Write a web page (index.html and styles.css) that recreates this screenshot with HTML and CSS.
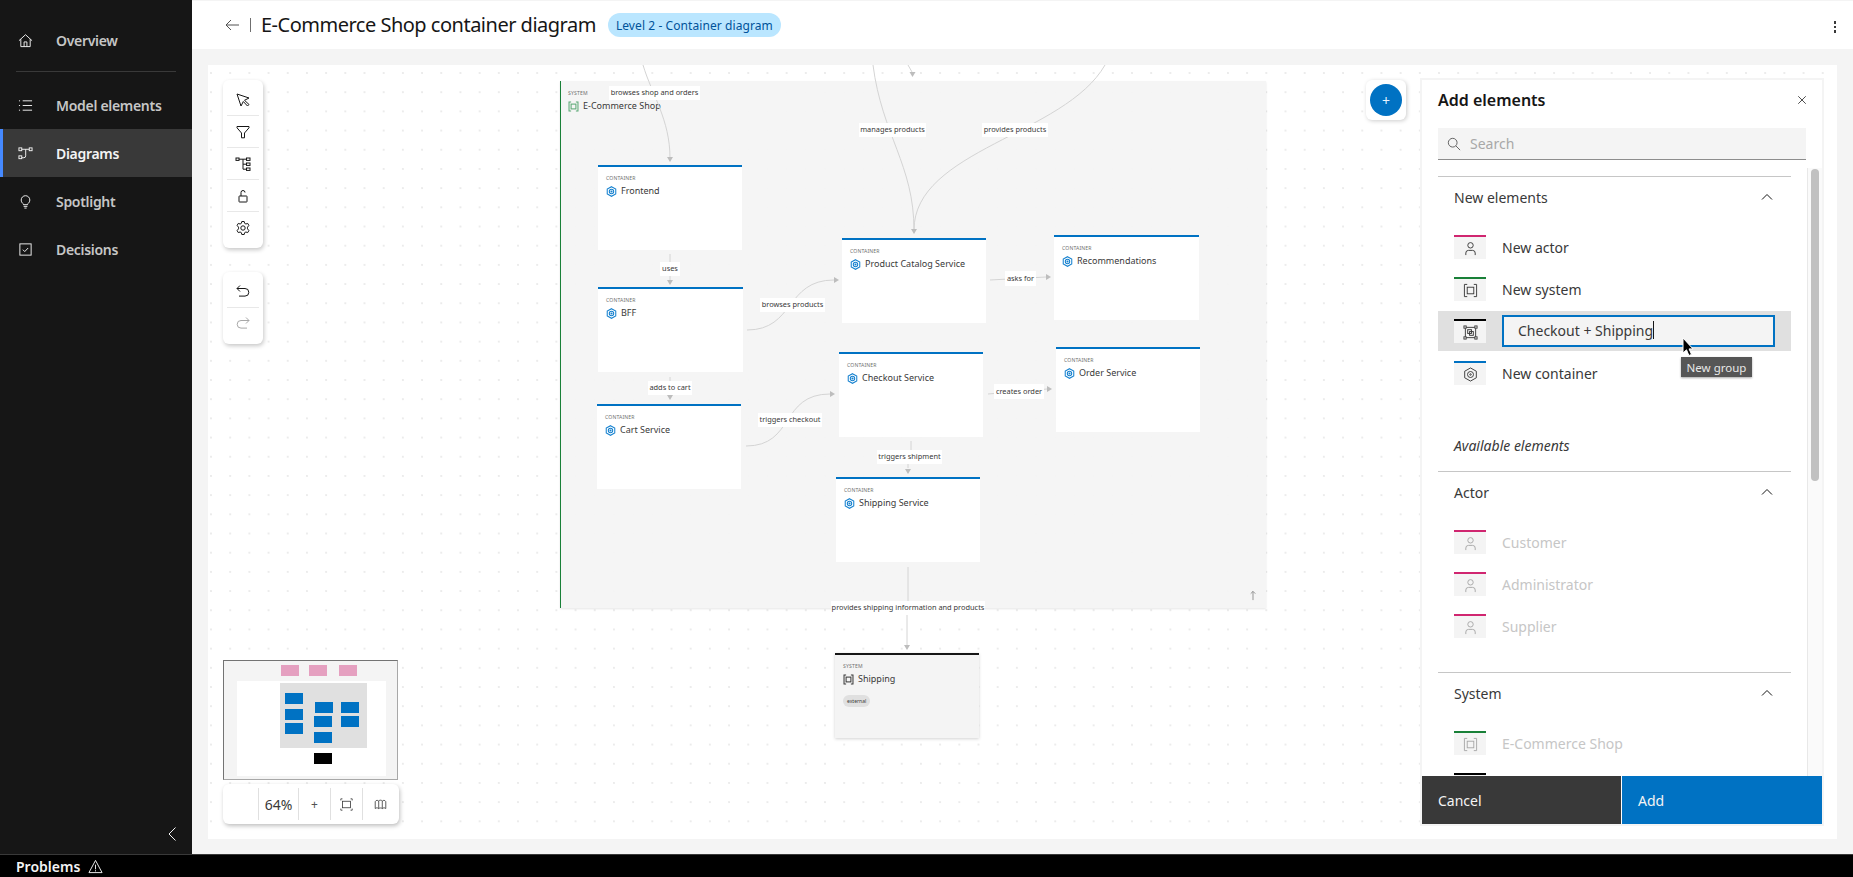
FILE: index.html
```html
<!DOCTYPE html>
<html lang="en">
<head>
<meta charset="utf-8">
<title>E-Commerce Shop container diagram</title>
<link rel="stylesheet" href="styles.css">
</head>
<body>
<svg class="defs" width="0" height="0" aria-hidden="true">
  <defs>
    <symbol id="i-person" viewBox="0 0 16 16"><circle cx="8" cy="4.6" r="2.9"/><path d="M3 15v-2.2A2.8 2.8 0 0 1 5.8 10h4.4a2.8 2.8 0 0 1 2.8 2.8V15"/></symbol>
    <symbol id="i-system" viewBox="0 0 16 16"><path d="M4.5 1.5h-3v13h3M11.5 1.5h3v13h-3"/><rect x="4.5" y="4.5" width="7" height="7"/></symbol>
    <symbol id="i-group" viewBox="0 0 16 16"><rect x="2.5" y="2.5" width="11" height="11"/><rect x="1" y="1" width="2.4" height="2.4" class="solid"/><rect x="12.6" y="1" width="2.4" height="2.4" class="solid"/><rect x="1" y="12.6" width="2.4" height="2.4" class="solid"/><rect x="12.6" y="12.6" width="2.4" height="2.4" class="solid"/><rect x="5" y="5" width="4" height="4"/><rect x="7" y="7" width="4" height="4"/></symbol>
    <symbol id="i-hex" viewBox="0 0 16 16"><path d="M8 1l6.2 3.5v7L8 15l-6.2-3.5v-7z"/><circle cx="8" cy="8" r="3.2"/><circle cx="8" cy="8" r=".8"/></symbol>
    <symbol id="i-chev" viewBox="0 0 16 16"><path d="M3 10.5L8 5.5l5 5"/></symbol>
  </defs>
</svg>
<div class="app">
  <nav class="sidebar">
    <a class="nav-item nav-first"><svg class="nav-icon" viewBox="0 0 16 16"><path d="M1 8.2L8 1.8l7 6.4M3 6.6v7.9h10V6.6M6.5 14.5V9.5h3v5"/></svg><span>Overview</span></a>
    <div class="nav-divider"></div>
    <a class="nav-item"><svg class="nav-icon" viewBox="0 0 16 16"><path d="M5 3h10M5 8h10M5 13h10M1 3h1.2M1 8h1.2M1 13h1.2"/></svg><span>Model elements</span></a>
    <a class="nav-item nav-active"><svg class="nav-icon" viewBox="0 0 16 16"><rect x="1" y="2" width="3" height="3"/><rect x="12" y="2" width="3" height="3"/><rect x="1" y="10.5" width="3" height="3"/><path d="M4 3.5h8M8.2 3.5v7a2 2 0 0 1-2 2H4"/></svg><span>Diagrams</span></a>
    <a class="nav-item"><svg class="nav-icon" viewBox="0 0 16 16"><path d="M5.8 11.4V10.6C4.4 9.7 3.4 8.2 3.4 6.4a4.6 4.6 0 0 1 9.2 0c0 1.8-1 3.3-2.4 4.2v.8zM6 13.2h4M6.8 15h2.4"/></svg><span>Spotlight</span></a>
    <a class="nav-item"><svg class="nav-icon" viewBox="0 0 16 16"><rect x="2" y="2" width="12" height="12"/><path d="M5.2 8.2l2 2 3.6-3.8"/></svg><span>Decisions</span></a>
    <button class="collapse" aria-label="Collapse"><svg viewBox="0 0 12 16"><path d="M9.5 1.5L3 8l6.5 6.5"/></svg></button>
  </nav>
  <div class="content">
    <header class="topbar">
      <svg class="back" viewBox="0 0 16 16"><path d="M15 8H2M7 3L2 8l5 5"/></svg>
      <span class="sep"></span>
      <h1 class="title">E-Commerce Shop container diagram</h1>
      <span class="badge">Level 2 - Container diagram</span>
      <span class="kebab"><i></i><i></i><i></i></span>
    </header>
    <div class="work">
      <main class="canvas">
        <div class="sysbox">
          <div class="caps">SYSTEM</div>
          <div class="name"><svg class="node-icon green"><use href="#i-system"/></svg>E-Commerce Shop</div>
          <svg class="up" viewBox="0 0 8 12"><path d="M4 11V1.5M1.5 4L4 1.5 6.5 4"/></svg>
        </div>
        <svg class="edges" width="1645" height="774" viewBox="208 65 1645 774">
          <g class="lines">
            <path d="M643 65C652 95 670 120 670 158"/>
            <path d="M908 65L912 72"/>
            <path d="M873 65C882 135 914 165 914 230"/>
            <path d="M1105 65C1065 135 914 150 914 230"/>
            <path d="M670 254V280"/>
            <path d="M747 330C795 330 785 280 834 280"/>
            <path d="M990 280L1046 277"/>
            <path d="M670 377V394"/>
            <path d="M746 446C795 446 780 394 830 394"/>
            <path d="M988 394L1047 389"/>
            <path d="M911 441V455M908 455V468"/>
            <path d="M908 567V601M907 601V645"/>
          </g>
          <g class="heads">
            <path d="M667 157h6l-3 5z"/>
            <path d="M909.500 72h6l-3 5z"/>
            <path d="M911 229h6l-3 5z"/>
            <path d="M667 280h6l-3 5z"/>
            <path d="M834 277v6l5-3z"/>
            <path d="M1046 274v6l5-3z"/>
            <path d="M667 395h6l-3 5z"/>
            <path d="M830 391v6l5-3z"/>
            <path d="M1047 386v6l5-3z"/>
            <path d="M905 469h6l-3 5z"/>
            <path d="M904 645h6l-3 5z"/>
          </g>
        </svg>
        <div class="node n-frontend"><div class="caps">CONTAINER</div><div class="name"><svg class="node-icon blue"><use href="#i-hex"/></svg>Frontend</div></div>
        <div class="node n-bff"><div class="caps">CONTAINER</div><div class="name"><svg class="node-icon blue"><use href="#i-hex"/></svg>BFF</div></div>
        <div class="node n-cart"><div class="caps">CONTAINER</div><div class="name"><svg class="node-icon blue"><use href="#i-hex"/></svg>Cart Service</div></div>
        <div class="node n-catalog"><div class="caps">CONTAINER</div><div class="name"><svg class="node-icon blue"><use href="#i-hex"/></svg>Product Catalog Service</div></div>
        <div class="node n-rec"><div class="caps">CONTAINER</div><div class="name"><svg class="node-icon blue"><use href="#i-hex"/></svg>Recommendations</div></div>
        <div class="node n-checkout"><div class="caps">CONTAINER</div><div class="name"><svg class="node-icon blue"><use href="#i-hex"/></svg>Checkout Service</div></div>
        <div class="node n-order"><div class="caps">CONTAINER</div><div class="name"><svg class="node-icon blue"><use href="#i-hex"/></svg>Order Service</div></div>
        <div class="node n-shipsvc"><div class="caps">CONTAINER</div><div class="name"><svg class="node-icon blue"><use href="#i-hex"/></svg>Shipping Service</div></div>
        <div class="node node-ext n-ship"><div class="caps">SYSTEM</div><div class="name"><svg class="node-icon dark"><use href="#i-system"/></svg>Shipping</div><span class="tag">external</span></div>

        <span class="lbl l1">browses shop and orders</span>
        <span class="lbl l2">uses</span>
        <span class="lbl l3">manages products</span>
        <span class="lbl l4">provides products</span>
        <span class="lbl l5">browses products</span>
        <span class="lbl l6">asks for</span>
        <span class="lbl l7">adds to cart</span>
        <span class="lbl l8">triggers checkout</span>
        <span class="lbl l9">creates order</span>
        <span class="lbl l10">triggers shipment</span>
        <span class="lbl l11">provides shipping information and products</span>

        <div class="tools tools-main">
          <button class="tool"><svg viewBox="0 0 16 16"><path d="M2 2l4 12 2.300-4.500L12.500 14 14 12.500 9.500 8.300 14 6z"/></svg></button>
          <button class="tool"><svg viewBox="0 0 16 16"><path d="M2 2.500h12v1.300L9.500 9v4.800h-3V9L2 3.800z"/></svg></button>
          <button class="tool"><svg viewBox="0 0 16 16"><rect x="1" y="2" width="3" height="2.400"/><rect x="11.500" y="2" width="3.500" height="2.400"/><rect x="11.500" y="7" width="3.500" height="2.400"/><rect x="11.500" y="12" width="3.500" height="2.400"/><path d="M4 3.200h7.500M8 3.200v10h3.500M8 8.200h3.500"/></svg></button>
          <button class="tool"><svg viewBox="0 0 16 16"><rect x="4" y="8" width="8" height="6" rx=".5"/><path d="M6 8V4.500a2 2 0 0 1 4 0"/></svg></button>
          <button class="tool"><svg viewBox="0 0 16 16"><path d="M6.800 1.500h2.400l.4 1.800 1.300.7 1.800-.6 1.200 2-1.400 1.800v1.600l1.400 1.800-1.200 2-1.800-.6-1.300.7-.4 1.800H6.800l-.4-1.800-1.300-.7-1.800.6-1.200-2 1.400-1.800V7.200L2.100 5.400l1.200-2 1.800.6 1.300-.7z"/><circle cx="8" cy="8" r="2.200"/></svg></button>
        </div>
        <div class="tools tools-undo">
          <button class="tool"><svg viewBox="0 0 16 16"><path d="M5 1.500L2 4.500l3 3M2 4.500h8a3.800 3.800 0 0 1 0 7.600H4"/></svg></button>
          <button class="tool tool-off"><svg viewBox="0 0 16 16"><path d="M11 1.500l3 3-3 3M14 4.500H6a3.800 3.800 0 0 0 0 7.600h6"/></svg></button>
        </div>

        <div class="minimap">
          <div class="mm-page"></div>
          <div class="mm-sys"></div>
          <i class="mm p1"></i><i class="mm p2"></i><i class="mm p3"></i>
          <i class="mm b1"></i><i class="mm b2"></i><i class="mm b3"></i><i class="mm b4"></i><i class="mm b5"></i><i class="mm b6"></i><i class="mm b7"></i><i class="mm b8"></i>
          <i class="mm k1"></i>
        </div>
        <div class="zoombar">
          <span class="z-cell z-blank"></span>
          <span class="z-cell z-pct">64%</span>
          <span class="z-cell z-btn z-plus">+</span>
          <span class="z-cell z-btn"><svg viewBox="0 0 16 16"><rect x="3" y="4" width="10" height="8"/><path d="M1 3V1h2M13 1h2v2M15 13v2h-2M3 15H1v-2"/></svg></span>
          <span class="z-cell z-btn"><svg viewBox="0 0 16 16"><path d="M1.500 4.500c1-2 3-2 4.300-.7 1-1.500 3.400-1.500 4.400 0 1.300-1.300 3.300-1.300 4.300.7v8.500c-1-1.200-3-1.200-4.300 0-1-1-3.400-1-4.400 0-1.300-1.200-3.300-1.200-4.300 0zM5.800 3.800V13M10.200 3.800V13"/></svg></span>
        </div>

        <button class="add-fab" aria-label="Add"><span>+</span></button>

        <aside class="panel">
          <div class="panel-head"><h2>Add elements</h2><svg class="close" viewBox="0 0 16 16"><path d="M3 3l10 10M13 3L3 13"/></svg></div>
          <div class="search"><svg viewBox="0 0 16 16"><circle cx="6.500" cy="6.500" r="5"/><path d="M10.200 10.200L15 15"/></svg><span>Search</span></div>
          <div class="panel-body">
            <div class="list">
              <section class="sec">
                <div class="sec-head"><span>New elements</span><svg class="chev"><use href="#i-chev"/></svg></div>
                <div class="row"><span class="thumb t-pink"><svg><use href="#i-person"/></svg></span><span class="row-text">New actor</span></div>
                <div class="row"><span class="thumb t-green"><svg><use href="#i-system"/></svg></span><span class="row-text">New system</span></div>
                <div class="row row-edit"><span class="thumb t-black"><svg><use href="#i-group"/></svg></span><span class="field">Checkout + Shipping<i class="caret"></i></span></div>
                <div class="row"><span class="thumb t-blue"><svg><use href="#i-hex"/></svg></span><span class="row-text">New container</span></div>
              </section>
              <div class="avail">Available elements</div>
              <section class="sec sec-gap">
                <div class="sec-head"><span>Actor</span><svg class="chev"><use href="#i-chev"/></svg></div>
                <div class="row row-off"><span class="thumb t-pink"><svg><use href="#i-person"/></svg></span><span class="row-text">Customer</span></div>
                <div class="row row-off"><span class="thumb t-pink"><svg><use href="#i-person"/></svg></span><span class="row-text">Administrator</span></div>
                <div class="row row-off"><span class="thumb t-pink"><svg><use href="#i-person"/></svg></span><span class="row-text">Supplier</span></div>
              </section>
              <section class="sec">
                <div class="sec-head"><span>System</span><svg class="chev"><use href="#i-chev"/></svg></div>
                <div class="row row-off"><span class="thumb t-green"><svg><use href="#i-system"/></svg></span><span class="row-text">E-Commerce Shop</span></div>
                <div class="row row-off"><span class="thumb t-black"><svg><use href="#i-system"/></svg></span></div>
              </section>
            </div>
            <div class="track"><div class="track-thumb"></div></div>
          </div>
          <div class="panel-foot"><button class="btn btn-cancel">Cancel</button><button class="btn btn-add">Add</button></div>
          <svg class="pointer" viewBox="0 0 12 20"><path d="M1 1v15l3.500-3.200 2.400 5.700 2.600-1.100-2.400-5.500H11z"/></svg>
          <span class="tooltip">New group</span>
        </aside>
      </main>
    </div>
  </div>
</div>
<footer class="status"><span>Problems</span><svg viewBox="0 0 16 16"><path d="M8 1.500L15 14.500H1z"/><path d="M8 6v5M8 12v1.200"/></svg></footer>
</body>
</html>
```
FILE: styles.css
```css
* { box-sizing: border-box; }
html, body { margin: 0; height: 100%; overflow: hidden; }
body {
  display: flex; flex-direction: column; height: 877px; background: #000;
  font-family: "Noto Sans", "Liberation Sans", sans-serif; color: #161616;
}
button { font: inherit; border: 0; padding: 0; background: none; }
h1, h2 { margin: 0; font-weight: 400; }
.defs { position: absolute; }
svg { fill: none; stroke: currentColor; stroke-width: 1; display: block; }
.solid { fill: #fff; }

.app { flex: none; height: 854px; display: flex; }
.sidebar { flex: none; width: 192px; background: #161616; display: flex; flex-direction: column; padding-top: 16px; position: relative; }
.nav-item { height: 48px; display: flex; align-items: center; padding-left: 18px; gap: 23px; color: #c6c6c6; font-size: 14px; font-weight: 600; letter-spacing: -.3px; flex: none; }
.nav-first { margin-bottom: 7px; }
.nav-icon { width: 15px; height: 15px; color: #f4f4f4; flex: none; }
.nav-divider { height: 1px; background: #393939; margin: 0 16px 9px; flex: none; }
.nav-active { background: #393939; color: #f4f4f4; border-left: 3px solid #4589ff; padding-left: 15px; }
.collapse { position: absolute; right: 14px; bottom: 12px; width: 12px; height: 16px; color: #f4f4f4; }
.collapse svg { width: 12px; height: 16px; }

.content { flex: 1; min-width: 0; display: flex; flex-direction: column; background: #f4f4f4; padding-top: 1px; }
.topbar { flex: none; height: 48px; background: #fff; display: flex; align-items: center; padding-left: 32px; position: relative; }
.back { width: 16px; height: 16px; color: #525252; }
.sep { width: 1px; height: 14px; background: #6f6f6f; margin: 0 10px; }
.title { font-size: 20px; letter-spacing: -.5px; color: #161616; line-height: 1; white-space: nowrap; }
.badge { margin-left: 12px; height: 24px; padding: 0 8px; border-radius: 12px; background: #bae6ff; color: #00539a; font-size: 12px; letter-spacing: .08px; display: flex; align-items: center; white-space: nowrap; }
.kebab { position: absolute; right: 17px; top: 20px; display: flex; flex-direction: column; gap: 2px; }
.kebab i { width: 2.500px; height: 2.500px; background: #393939; display: block; }

.work { flex: 1; min-height: 0; padding: 16px 16px 15px; }
.canvas {
  position: relative; height: 100%; overflow: hidden; background-color: #fff;
  background-image: radial-gradient(circle, #e4e4e4 .6px, transparent .9px);
  background-size: 19.2px 19.2px; background-position: -6.600px -1.600px;
}
.edges { position: absolute; left: 0; top: 0; }
.lines path { stroke: #d4d4d4; stroke-width: 1; }
.heads path { fill: #bdbdbd; stroke: none; }

.sysbox { position: absolute; left: 352px; top: 16px; width: 706px; height: 527px; background: rgba(244,244,244,.95); border-left: 1.500px solid #198038; box-shadow: 0 1px 2px rgba(0,0,0,.1); padding: 9px 0 0 7px; }
.up { position: absolute; right: 9px; bottom: 7px; width: 8px; height: 11px; color: #8d8d8d; }
.caps { font-size: 5.100px; line-height: 7px; color: #6f6f6f; letter-spacing: .15px; }
.name { display: flex; align-items: center; gap: 4px; font-size: 9px; line-height: 12px; color: #393939; margin-top: 3px; white-space: nowrap; }
.node-icon { width: 11px; height: 11px; flex: none; stroke-width: 1.500; }
.blue { color: #1480cf; }
.green { color: #5aa874; }
.dark { color: #393939; }

.node { position: absolute; width: 144px; height: 85px; background: #fff; border-top: 2px solid #0072c3; padding: 8px 0 0 8px; }
.node-ext { background: #f4f4f4; border-top-color: #161616; box-shadow: 0 1px 3px rgba(0,0,0,.18); }
.tag { display: inline-flex; align-items: center; margin-top: 10px; height: 12px; padding: 0 4px; border-radius: 6px; background: #e0e0e0; font-size: 5px; color: #393939; }
.n-frontend { left: 390px; top: 100px; }
.n-bff { left: 390px; top: 222px; width: 145px; }
.n-cart { left: 389px; top: 339px; }
.n-catalog { left: 634px; top: 173px; }
.n-rec { left: 846px; top: 170px; width: 145px; }
.n-checkout { left: 631px; top: 287px; }
.n-order { left: 848px; top: 282px; }
.n-shipsvc { left: 628px; top: 412px; }
.n-ship { left: 627px; top: 588px; }

.lbl { position: absolute; height: 14px; padding-bottom: 2px; background: #fff; display: flex; align-items: center; justify-content: center; font-size: 7.400px; color: #393939; white-space: nowrap; }
.l1 { left: 401px; top: 21px; width: 91px; }
.l2 { left: 452px; top: 197px; width: 20px; }
.l3 { left: 651px; top: 58px; width: 67px; }
.l4 { left: 774px; top: 58px; width: 66px; }
.l5 { left: 552px; top: 233px; width: 65px; }
.l6 { left: 797px; top: 206px; width: 31px; height: 15px; }
.l7 { left: 440px; top: 316px; width: 44px; }
.l8 { left: 550px; top: 348px; width: 64px; }
.l9 { left: 786px; top: 319px; width: 50px; height: 15px; }
.l10 { left: 669px; top: 385px; width: 65px; }
.l11 { left: 623px; top: 536px; width: 154px; }

.tools { position: absolute; left: 15px; width: 40px; background: #fff; border-radius: 6px; box-shadow: 1px 2px 4px rgba(0,0,0,.22); display: flex; flex-direction: column; padding: 4px 4px; }
.tools-main { top: 15px; height: 168px; }
.tools-undo { top: 207px; height: 72px; }
.tool { height: 32px; flex: none; display: flex; align-items: center; justify-content: center; border-bottom: 1px solid #e8e8e8; color: #161616; }
.tool:last-child { border-bottom: 0; }
.tool svg { width: 16px; height: 16px; }
.tool-off { color: #a8a8a8; }

.minimap { position: absolute; left: 15px; top: 595px; width: 175px; height: 120px; background: #f4f4f4; border: 1px solid #a8a8a8; border-top-color: #737373; border-left-color: #737373; }
.mm-page { position: absolute; left: 13px; top: 20px; width: 149px; height: 95px; background: #fff; }
.mm-sys { position: absolute; left: 56px; top: 22px; width: 87px; height: 65px; background: #e0e0e0; }
.mm { position: absolute; width: 18px; height: 10.500px; background: #0072c3; display: block; }
.p1, .p2, .p3 { background: #e5a0c0; top: 4px; }
.p1 { left: 57px; } .p2 { left: 85px; } .p3 { left: 115px; }
.b1, .b2, .b3 { left: 61px; }
.b1 { top: 32px; } .b2 { top: 48px; } .b3 { top: 62px; }
.b4 { left: 91px; top: 41px; } .b5 { left: 90px; top: 55px; } .b6 { left: 90px; top: 71px; }
.b7 { left: 117px; top: 41px; } .b8 { left: 117px; top: 55px; }
.k1 { left: 90px; top: 92px; background: #000; }

.zoombar { position: absolute; left: 15px; top: 719px; width: 176px; height: 40px; background: #fff; border-radius: 6px; box-shadow: 1px 2px 4px rgba(0,0,0,.25); display: flex; align-items: center; }
.z-cell { height: 32px; display: flex; align-items: center; justify-content: center; border-right: 1px solid #e0e0e0; flex: none; color: #393939; }
.z-blank { width: 36px; }
.z-pct { width: 40px; font-size: 14px; }
.z-btn { width: 32px; }
.z-btn svg { width: 13px; height: 13px; }
.z-plus { font-size: 12px; color: #525252; }
.z-cell:last-child { border-right: 0; width: 35px; }

.add-fab { position: absolute; left: 1158px; top: 15px; width: 40px; height: 40px; background: #fff; border-radius: 6px; box-shadow: 1px 1px 4px rgba(0,0,0,.2); display: flex; align-items: center; justify-content: center; }
.add-fab span { width: 32px; height: 32px; border-radius: 50%; background: #0072c3; color: #e8f4ff; font-size: 14px; display: flex; align-items: center; justify-content: center; }

.panel { position: absolute; left: 1212px; top: 13px; width: 404px; height: 748px; background: #fff; border: 2px solid #f4f4f4; display: flex; flex-direction: column; }
.panel-head { flex: none; height: 48px; padding: 0 16px 8px; display: flex; align-items: center; justify-content: space-between; }
.panel-head h2 { font-size: 16px; font-weight: 600; color: #161616; }
.close { width: 12px; height: 12px; margin-right: -2px; color: #161616; }
.search { flex: none; height: 32px; margin: 0 16px; background: #f4f4f4; border-bottom: 1px solid #8d8d8d; display: flex; align-items: center; padding-left: 9px; gap: 9px; font-size: 14px; color: #a8a8a8; }
.search svg { width: 14px; height: 14px; color: #525252; }
.panel-body { flex: 1; min-height: 0; display: flex; margin-top: 8px; overflow: hidden; }
.list { flex: none; width: 385px; padding: 8px 16px 0; }
.sec { border-top: 1px solid #c6c6c6; }
.sec-gap { margin-bottom: 26px; }
.sec-head { height: 42px; display: flex; align-items: center; justify-content: space-between; padding: 0 16px 2px; margin-bottom: 8px; font-size: 14px; color: #393939; }
.chev { width: 16px; height: 16px; color: #161616; }
.row { height: 40px; margin-bottom: 2px; padding: 8px 0 0 16px; display: flex; gap: 16px; }
.thumb { flex: none; width: 32px; height: 24px; background: #f4f4f4; display: flex; align-items: center; justify-content: center; color: #393939; border-top: 2px solid; }
.thumb svg { width: 15px; height: 15px; }
.t-pink { border-top-color: #d02670; }
.t-green { border-top-color: #198038; }
.t-black { border-top-color: #000; }
.t-blue { border-top-color: #0072c3; }
.row-text { font-size: 14px; color: #393939; line-height: 24px; margin-top: 1px; }
.row-edit { background: #e0e0e0; align-items: center; padding: 0 0 0 16px; }
.field { width: 273px; height: 32px; background: #f4f4f4; border: 2px solid #0072c3; padding: 0 0 2px 14px; font-size: 14px; color: #393939; display: flex; align-items: center; }
.caret { width: 1px; height: 18px; background: #161616; display: block; }
.row-off .row-text { color: #c6c6c6; }
.row-off .thumb svg { color: #a8a8a8; }
.avail { font-style: italic; font-size: 14px; line-height: 20px; color: #393939; padding-left: 16px; margin: 43px 0 15px; }
.track { flex: none; width: 15px; background: #fafafa; border-left: 1px solid #e8e8e8; padding: 1px 3px 0; }
.track-thumb { width: 8px; height: 312px; border-radius: 4px; background: #c1c1c1; }
.panel-foot { flex: none; height: 48px; display: flex; gap: 1px; position: relative; z-index: 1; }
.btn { height: 48px; text-align: left; padding: 0 16px; font-size: 14px; color: #f4f4f4; }
.btn-cancel { background: #393939; width: 199px; }
.btn-add { background: #0072c3; width: 200px; }
.pointer { position: absolute; left: 260px; top: 257px; width: 12px; height: 20px; fill: #000; stroke: #fff; }
.tooltip { position: absolute; left: 259px; top: 277px; width: 71px; height: 20px; background: #565656; color: #e8e8e8; font-size: 11.500px; display: flex; align-items: center; justify-content: center; box-shadow: 0 1px 2px rgba(0,0,0,.35); }

.status { flex: none; height: 23px; background: #000; border-top: 1px solid #393939; display: flex; align-items: center; padding-left: 16px; gap: 8px; color: #f4f4f4; font-size: 14px; font-weight: 600; }
.status svg { width: 15px; height: 15px; }
```
